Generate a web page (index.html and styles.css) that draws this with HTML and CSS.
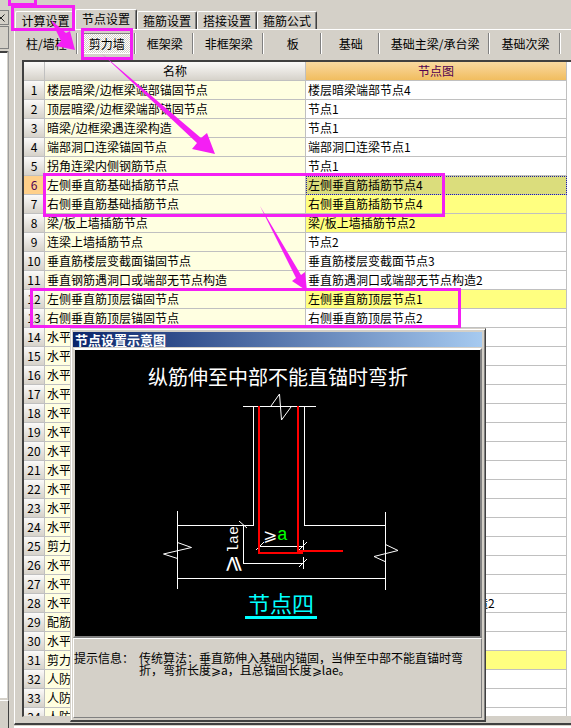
FILE: index.html
```html
<!DOCTYPE html>
<html lang="zh-CN">
<head>
<meta charset="utf-8">
<title>节点设置</title>
<link rel="stylesheet" href="styles.css">
</head>
<body>
<div class="app">
  <aside class="dock">
    <button class="dock-close" type="button" aria-label="关闭"><svg width="6" height="8" viewBox="0 0 6 8"><path d="M4.500 .5L1 4l3.500 3.500M0 3l1 1-1 1" fill="none" stroke="#222"/></svg></button>
    <div class="dock-bar"></div>
    <div class="dock-body"></div>
    <div class="dock-foot"></div>
  </aside>
  <main class="main">
    <nav class="tabs">
      <button class="tab" type="button">计算设置</button>
      <button class="tab active" type="button">节点设置</button>
      <button class="tab" type="button">箍筋设置</button>
      <button class="tab" type="button">搭接设置</button>
      <button class="tab" type="button">箍筋公式</button>
    </nav>
    <section class="page">
      <div class="tools">
        <div class="tool"><button type="button">柱/墙柱</button></div>
        <div class="tool"><button type="button" class="pressed">剪力墙</button></div>
        <div class="tool"><button type="button">框架梁</button></div>
        <div class="tool"><button type="button">非框架梁</button></div>
        <div class="tool"><button type="button">板</button></div>
        <div class="tool"><button type="button">基础</button></div>
        <div class="tool"><button type="button">基础主梁/承台梁</button></div>
        <div class="tool"><button type="button">基础次梁</button></div>
      </div>
      <div class="sheet">
        <table>
          <colgroup><col class="c-num"><col><col></colgroup>
          <thead><tr><th></th><th>名称</th><th class="hot">节点图</th></tr></thead>
          <tbody>
            <tr><th>1</th><td>楼层暗梁/边框梁端部锚固节点</td><td>楼层暗梁端部节点4</td></tr>
            <tr><th>2</th><td>顶层暗梁/边框梁端部锚固节点</td><td>节点1</td></tr>
            <tr><th>3</th><td>暗梁/边框梁遇连梁构造</td><td>节点1</td></tr>
            <tr><th>4</th><td>端部洞口连梁锚固节点</td><td>端部洞口连梁节点1</td></tr>
            <tr><th>5</th><td>拐角连梁内侧钢筋节点</td><td>节点1</td></tr>
            <tr class="current"><th>6</th><td>左侧垂直筋基础插筋节点</td><td>左侧垂直筋插筋节点4</td></tr>
            <tr class="changed"><th>7</th><td>右侧垂直筋基础插筋节点</td><td>右侧垂直筋插筋节点4</td></tr>
            <tr class="changed"><th>8</th><td>梁/板上墙插筋节点</td><td>梁/板上墙插筋节点2</td></tr>
            <tr><th>9</th><td>连梁上墙插筋节点</td><td>节点2</td></tr>
            <tr><th>10</th><td>垂直筋楼层变截面锚固节点</td><td>垂直筋楼层变截面节点3</td></tr>
            <tr><th>11</th><td>垂直钢筋遇洞口或端部无节点构造</td><td>垂直筋遇洞口或端部无节点构造2</td></tr>
            <tr class="changed"><th>12</th><td>左侧垂直筋顶层锚固节点</td><td>左侧垂直筋顶层节点1</td></tr>
            <tr><th>13</th><td>右侧垂直筋顶层锚固节点</td><td>右侧垂直筋顶层节点2</td></tr>
            <tr><th>14</th><td>水平</td><td></td></tr>
            <tr><th>15</th><td>水平</td><td></td></tr>
            <tr><th>16</th><td>水平</td><td></td></tr>
            <tr><th>17</th><td>水平</td><td></td></tr>
            <tr><th>18</th><td>水平</td><td></td></tr>
            <tr><th>19</th><td>水平</td><td></td></tr>
            <tr><th>20</th><td>水平</td><td></td></tr>
            <tr><th>21</th><td>水平</td><td></td></tr>
            <tr><th>22</th><td>水平</td><td></td></tr>
            <tr><th>23</th><td>水平</td><td></td></tr>
            <tr><th>24</th><td>水平</td><td></td></tr>
            <tr><th>25</th><td>剪力</td><td></td></tr>
            <tr><th>26</th><td>水平</td><td></td></tr>
            <tr><th>27</th><td>水平</td><td></td></tr>
            <tr><th>28</th><td>水平</td><td>水平钢筋遇洞口或端部无节点构造2</td></tr>
            <tr><th>29</th><td>配筋</td><td></td></tr>
            <tr><th>30</th><td>水平</td><td></td></tr>
            <tr class="changed"><th>31</th><td>剪力</td><td></td></tr>
            <tr><th>32</th><td>人防</td><td></td></tr>
            <tr><th>33</th><td>人防</td><td></td></tr>
            <tr><th>34</th><td>人防</td><td></td></tr>
          </tbody>
        </table>
      </div>
    </section>
    <footer class="status"></footer>
  </main>

  <section class="dialog" role="dialog" aria-labelledby="dlg-title">
    <h2 class="dialog-title" id="dlg-title">节点设置示意图</h2>
    <div class="picture">
      <svg class="drawing" viewBox="75 350 405 286" role="img" aria-label="节点四">
        <text class="cad" x="148" y="385" font-size="20">纵筋伸至中部不能直锚时弯折</text>
        <g class="line" shape-rendering="crispEdges">
          <path d="M243 406.500H316M253.500 406V525.500H177M304.500 406V525.500H385.500M177.500 511V589M177 578.500H386M385.500 512V590"/>
          <path d="M243.500 525V563.500H304M260 546.500H303M303.500 540V552M303.500 557V569"/>
        </g>
        <g class="line">
          <path d="M271 406l8.500-12 2 26L291 407"/>
          <path d="M177.500 542.500l14 5-28 6.500 14 4.500M385.500 544.500l12.500 6-24 6 12 5.500"/>
          <path d="M239 521l8 7M256 550l8-8M299 550l8-8M299 567l8-8"/>
        </g>
        <g class="rebar" shape-rendering="crispEdges">
          <path d="M259 406V553H303M298 406V551H343"/>
        </g>
        <text class="sym" x="263" y="541" font-size="17">⩾</text>
        <text class="mono green" x="277" y="540" font-size="18">a</text>
        <text class="sym" transform="translate(239 573) rotate(-90)" font-size="22">⩾</text>
        <text class="mono" transform="translate(238 553) rotate(-90)" font-size="15">lae</text>
        <text class="cad cyan" x="248" y="612" font-size="22">节点四</text>
        <path d="M245 617.500H317" stroke="#0ff" stroke-width="3" shape-rendering="crispEdges"/>
      </svg>
    </div>
    <dl class="hint">
      <dt>提示信息：</dt>
      <dd>传统算法：垂直筋伸入基础内锚固，当伸至中部不能直锚时弯折，弯折长度⩾a，且总锚固长度⩾lae。</dd>
    </dl>
  </section>

  <svg class="marks" width="571" height="340" aria-hidden="true">
    <g fill="none" stroke="#f41ff4" stroke-width="3">
      <path d="M9.500 0V4.500H35.500V0"/>
      <rect x="12.500" y="6.500" width="61" height="23"/>
      <rect x="82.500" y="29.500" width="49" height="29"/>
      <rect x="44.500" y="174.500" width="399" height="41"/>
      <rect x="31.500" y="289.500" width="428" height="37"/>
    </g>
    <g fill="#f41ff4">
      <path d="M51 20L66 33 70 31 75 50 56 46 61 41Z"/>
      <path d="M101 53L201 138 207 133 215 154 192 149 197 143Z"/>
      <path d="M260 206L301 275 305 272 307 291 292 281 296 278Z"/>
    </g>
  </svg>
</div>
</body>
</html>
```
FILE: styles.css
```css
* { box-sizing: border-box; }

body {
  margin: 0;
  background: #d4d0c8;
  color: #000;
  font: 12px/14px "Noto Sans CJK SC", sans-serif;
}

button {
  border: 0;
  padding: 0;
  background: none;
  color: inherit;
  font: inherit;
  white-space: nowrap;
}

.app {
  position: relative;
  display: flex;
  height: 100vh;
  min-height: 400px;
  overflow: hidden;
}

/* left dock */
.dock {
  flex: 0 0 14px;
  display: flex;
  flex-direction: column;
  padding: 10px 4px 0 0;
  border-right: 1px solid #d4d0c8;
}
.dock-close {
  height: 15px;
  width: 9px;
  text-align: left;
  border: 1px solid #808080;
  border-left: 0;
  line-height: 0;
}
.dock-bar {
  height: 23px;
  width: 9px;
  margin: 1px 0 2px;
  border: 1px solid #808080;
  border-left: 0;
}
.dock-body {
  flex: 1;
  background: #fff;
  border-top: 2px solid #404040;
  border-right: 1px solid #d4d0c8;
  border-bottom: 2px solid #d4d0c8;
  box-shadow: 1px 0 #a0a0a0;
  width: 8px;
}
.dock-foot {
  height: 28px;
  width: 9px;
  border-top: 1px solid #fff;
  border-right: 1px solid #404040;
}

/* tabs */
.main {
  flex: 1;
  min-width: 0;
  display: flex;
  flex-direction: column;
  padding-top: 9px;
}
.tabs {
  display: flex;
  align-items: flex-end;
  padding-left: 1px;
  height: 20px;
}
.tab {
  height: 18px;
  width: 60px;
  border-top: 1px solid #fff;
  border-left: 1px solid #fff;
  border-right: 1px solid #404040;
  box-shadow: inset -1px 0 #808080;
  border-radius: 2px 2px 0 0;
}
.tab:first-child { border-right: 0; box-shadow: none; }
.tab.active {
  height: 21px;
  width: 62px;
  margin-bottom: -1px;
  padding-bottom: 3px;
  background: #d4d0c8;
}

.page {
  flex: 1;
  min-height: 0;
  display: flex;
  flex-direction: column;
  border-top: 1px solid #fff;
  border-left: 1px solid #fff;
  border-bottom: 2px solid #404040;
  padding: 0 0 6px 7px;
}
.status {
  height: 3px;
  border-bottom: 2px solid #fff;
}

/* wall-type buttons */
.tools {
  display: flex;
  margin-left: -7px;
  padding: 3px 0 6px;
}
.tool {
  display: flex;
  flex: none;
  height: 21px;
  min-width: 58px;
  padding: 0 4px 0 5px;
  border-right: 1px solid #fff;
  box-shadow: inset -1px 0 #808080;
}
.tool button { flex: 1; padding: 0 6px; }
.tool .pressed {
  padding: 0 5px;
  border: 1px solid #808080;
  border-right-color: #fff;
  border-bottom-color: #fff;
  background: repeating-conic-gradient(#fff 0 25%, #d4d0c8 0 50%) 0 0 / 2px 2px;
}

/* table */
.sheet {
  flex: 1;
  min-height: 0;
  overflow: hidden;
  background: #fff;
  border-top: 2px solid #404040;
  border-left: 2px solid #404040;
  border-bottom: 1px solid #d4d0c8;
}
table {
  width: calc(100% - 4px);
  table-layout: fixed;
  border-collapse: separate;
  border-spacing: 0;
}
.c-num { width: 21px; }
th, td {
  height: 19px;
  padding: 0 2px;
  border-right: 1px solid #c0c0c0;
  border-bottom: 1px solid #c0c0c0;
  line-height: 18px;
  white-space: nowrap;
  overflow: hidden;
  text-align: left;
  font-weight: 400;
}
th {
  padding: 0;
  text-align: center;
  background: linear-gradient(#fbfaf9, #d6d2ca);
}
th.hot {
  color: #500050;
  background: linear-gradient(#f9d9a0, #f1bd5f);
}
td:nth-child(2) { background: #ffffe1; }
.changed td:nth-child(3) { background: #ffff80; }
.current th { background: #ffd08a; color: #500050; }
.current td:nth-child(3) {
  background: #dbdd7c;
  outline: 1px dotted #2020a0;
  outline-offset: -1px;
}

/* diagram window */
.dialog {
  position: absolute;
  left: 70px;
  top: 328px;
  width: 416px;
  padding: 3px 3px 2px 2px;
  background: #d4d0c8;
  border: 1px solid #d4d0c8;
  border-right: 1px solid #404040;
  border-bottom: 2px solid #404040;
  box-shadow: inset 1px 1px #fff, inset -1px 0 #808080;
}
.dialog-title {
  margin: 0;
  padding-left: 2px;
  height: 15px;
  font-size: 13px;
  line-height: 15px;
  color: #fff;
  background: linear-gradient(90deg, #0a246a, #a6caf0);
}
.picture {
  margin-top: 1px;
  border: 2px solid #fff;
  border-right-color: #808080;
  border-bottom-color: #808080;
  border-left-color: #d4d0c8;
  background: #000;
}
.drawing { display: block; width: 100%; }
.cad { fill: #fff; }
.cyan { fill: #0ff; }
.mono { fill: #fff; font-family: "Liberation Mono", monospace; }
.green { fill: #0f0; }
.sym { fill: #fff; font-family: "DejaVu Sans", sans-serif; }
.line { fill: none; stroke: #fff; }
.rebar { fill: none; stroke: #f00; stroke-width: 2; }

.hint {
  display: flex;
  height: 80px;
  margin: 0;
  padding: 13px 16px 0 0;
  border: 1px solid #fff;
  border-right-color: #808080;
  border-bottom-color: #808080;
  line-height: 12px;
}
.hint dt { flex: 0 0 65px; }
.hint dd { margin: 0; flex: 1; }

.marks {
  position: absolute;
  left: 0;
  top: 0;
  pointer-events: none;
}
```
